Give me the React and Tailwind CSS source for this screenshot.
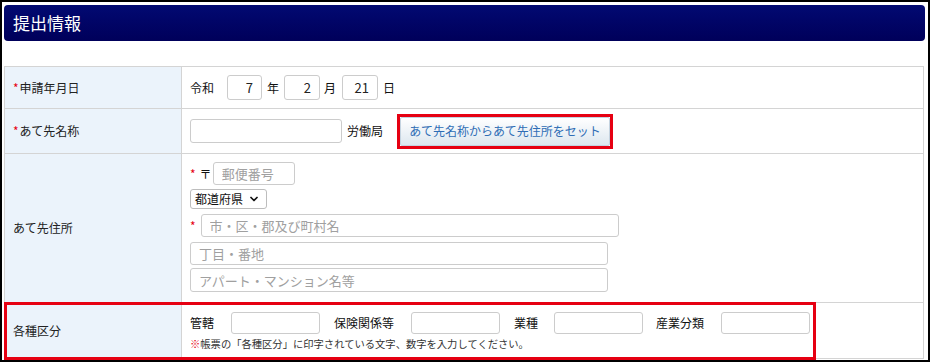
import { ChevronDown } from 'lucide-react';

const font = { fontFamily: '"Noto Sans CJK JP", "Noto Sans", sans-serif' };

const Field = ({ className = '', ...props }) => (
  <input
    readOnly
    className={`rounded-[3px] border border-[#cccccc] bg-white px-[8px] text-[13px] text-[#222] placeholder:text-[#a0a0a0] outline-none ${className}`}
    {...props}
  />
);

const Req = () => <span className="text-[#e60012] text-[12px] mr-[1px]">*</span>;

const Row = ({ label, required, className = '', children }) => (
  <div className={`relative flex border-b border-[#d4d4d4] ${className}`}>
    <div className="w-[177px] shrink-0 bg-[#ebf3fb] border-r border-[#d4d4d4] flex items-center pl-[8px] text-[12px] text-[#222]">
      {required && <Req />}
      {label}
    </div>
    <div className="flex-1 pl-[8px]">{children}</div>
  </div>
);

const App = () => {
  return (
    <div
      className="w-[930px] h-[362px] overflow-hidden border-2 border-black bg-white pl-[2px] pr-[3px] pt-[3px]"
      style={font}
    >
      <div className="h-[36px] rounded-[4px] bg-gradient-to-b from-[#020a72] to-[#00005a] flex items-center pl-[9px]">
        <h2 className="text-white text-[17px]">提出情報</h2>
      </div>

      <div className="mt-[25px] w-[920px] border-l border-r border-t border-[#d4d4d4]">
        <Row label="申請年月日" required className="h-[42px]">
          <div className="flex items-center h-full text-[12px] text-[#111]">
            <span>令和</span>
            <Field className="ml-[13px] w-[35px] h-[25px] text-right" defaultValue="7" />
            <span className="ml-[5px]">年</span>
            <Field className="ml-[5px] w-[36px] h-[25px] text-right" defaultValue="2" />
            <span className="ml-[4px]">月</span>
            <Field className="ml-[6px] w-[36px] h-[25px] text-right" defaultValue="21" />
            <span className="ml-[5px]">日</span>
          </div>
        </Row>

        <Row label="あて先名称" required className="h-[45px]">
          <div className="flex items-center h-full text-[12px] text-[#111]">
            <Field className="w-[152px] h-[24px]" />
            <span className="ml-[5px]">労働局</span>
            <div className="ml-[14px] border-[3px] border-[#e60012] w-[216px] h-[35px] flex">
              <button className="flex-1 rounded-[2px] border border-[#c4d3e0] bg-gradient-to-b from-white to-[#dde7ef] text-[12px] text-[#2f6db5]">
                あて先名称からあて先住所をセット
              </button>
            </div>
          </div>
        </Row>

        <Row label="あて先住所" className="h-[149px]">
          <div className="flex flex-col items-start pt-[8px] text-[12px] text-[#111]">
            <div className="flex items-center h-[23px]">
              <Req />
              <span className="ml-[3px] text-[12px]">〒</span>
              <Field className="ml-[1px] w-[82px] h-[23px]" placeholder="郵便番号" />
            </div>
            <div className="mt-[4px] w-[77px] h-[20px] rounded-[3px] border border-[#bdbdbd] flex items-center pl-[4px] gap-[5px] text-[12px] text-[#111]">
              <span>都道府県</span>
              <ChevronDown size={12} strokeWidth={3.5} />
            </div>
            <div className="mt-[5px] flex items-center h-[23px]">
              <Req />
              <Field className="ml-[4px] w-[418px] h-[23px]" placeholder="市・区・郡及び町村名" />
            </div>
            <Field className="mt-[5px] w-[418px] h-[23px]" placeholder="丁目・番地" />
            <Field className="mt-[3px] w-[418px] h-[24px]" placeholder="アパート・マンション名等" />
          </div>
        </Row>

        <Row label="各種区分" className="h-[56px]">
          <div className="pt-[9px] text-[12px] text-[#111]">
            <div className="flex items-center">
              <span>管轄</span>
              <Field className="ml-[17px] w-[89px] h-[22px]" />
              <span className="ml-[14px]">保険関係等</span>
              <Field className="ml-[17px] w-[89px] h-[22px]" />
              <span className="ml-[14px]">業種</span>
              <Field className="ml-[16px] w-[89px] h-[22px]" />
              <span className="ml-[13px]">産業分類</span>
              <Field className="ml-[17px] w-[89px] h-[22px]" />
            </div>
            <p className="mt-[3px] text-[10.3px] leading-[14px] text-[#333]">
              <span className="text-[#e60012]">※</span>帳票の「各種区分」に印字されている文字、数字を入力してください。
            </p>
          </div>
          <div className="absolute left-[-1px] top-[-1px] w-[812px] h-[58px] border-[3px] border-[#e60012] pointer-events-none"></div>
        </Row>
      </div>
    </div>
  );
};

export default App;
